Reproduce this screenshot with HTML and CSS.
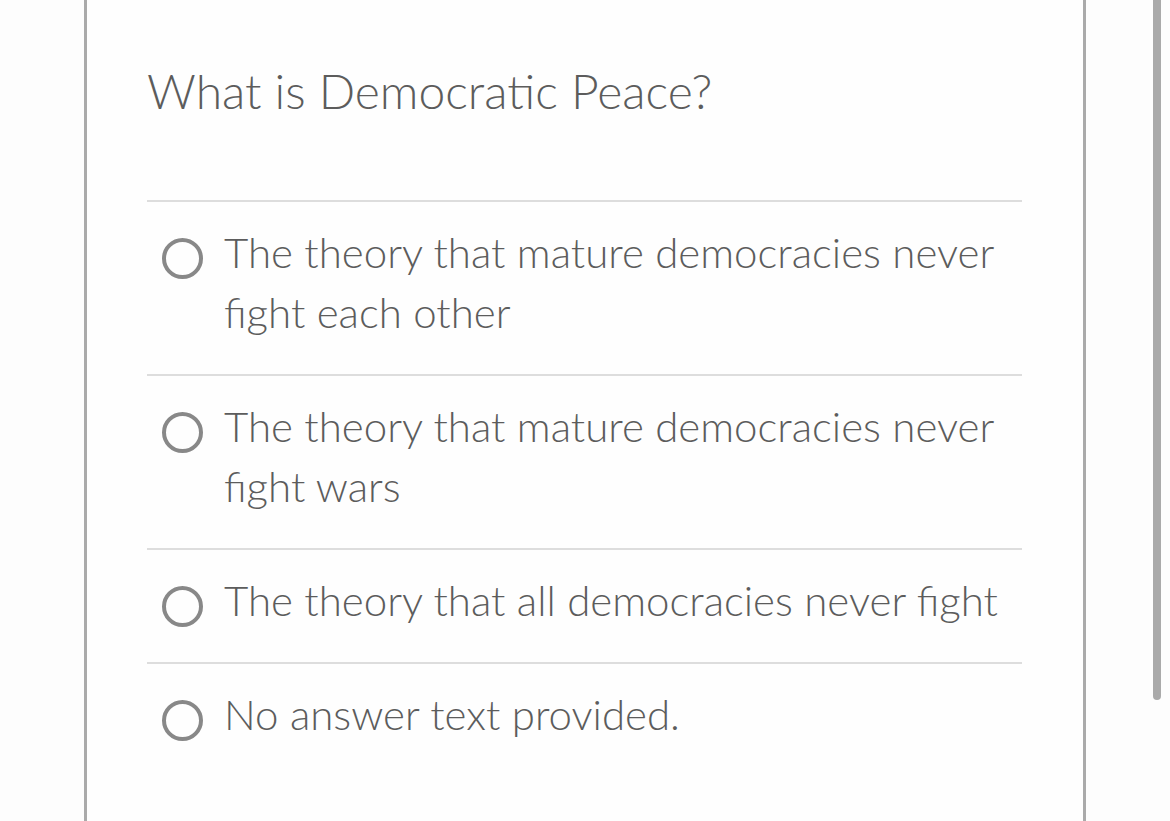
FILE: index.html
```html
<!DOCTYPE html>
<html>
<head>
<meta charset="utf-8">
<link rel="stylesheet" href="styles.css">
</head>
<body>
<div class="page">
  <div class="card">
    <h1 class="question">What is Democratic Peace?</h1>
    <ul class="answers">
      <li class="answer"><span class="radio"></span><span class="label">The theory that mature democracies never fight each other</span></li>
      <li class="answer"><span class="radio"></span><span class="label">The theory that mature democracies never fight wars</span></li>
      <li class="answer"><span class="radio"></span><span class="label">The theory that all democracies never fight</span></li>
      <li class="answer"><span class="radio"></span><span class="label">No answer text provided.</span></li>
    </ul>
  </div>
  <div class="scrollbar"></div>
</div>
</body>
</html>
```
FILE: styles.css
```css
html, body {
  margin: 0;
  padding: 0;
  background: #fdfdfd;
  height: 100%;
  overflow: hidden;
}
.page {
  position: relative;
  height: 821px;
  padding-left: 84px;
  font-family: Lato, "Open Sans", sans-serif;
  font-weight: 300;
  color: #5c5c5c;
}
.card {
  width: 1002px;
  height: 821px;
  box-sizing: border-box;
  border-left: 3px solid #aaa;
  border-right: 3px solid #aaa;
  padding: 62px 61px 0 60px;
  background: #fefefe;
}
.question {
  margin: 0 0 80px 0;
  font-size: 48px;
  line-height: 58px;
  font-weight: 300;
  color: #5c5c5c;
}
.answers {
  list-style: none;
  margin: 0;
  padding: 0;
}
.answer {
  display: flex;
  align-items: flex-start;
  border-top: 2px solid #ddd;
  padding: 20px 0 32px 15px;
  font-size: 42px;
  line-height: 60px;
}
.radio {
  flex: none;
  width: 33px;
  height: 33px;
  border: 4px solid #888;
  border-radius: 50%;
  margin-top: 16px;
  margin-right: 21px;
}
.label {
  flex: 1;
}
.scrollbar {
  position: absolute;
  left: 1153px;
  top: 0;
  width: 8px;
  height: 700px;
  background: #aaa;
  border-radius: 0 0 4px 4px;
}
```
